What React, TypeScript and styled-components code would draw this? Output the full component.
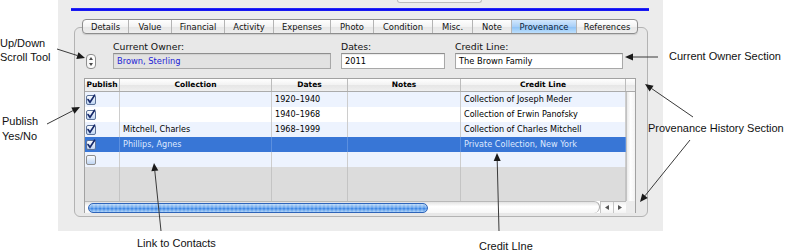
import styled, { createGlobalStyle, css } from 'styled-components'

const GlobalStyle = createGlobalStyle`
  *, *::before, *::after { box-sizing: border-box; }
  html, body { margin: 0; padding: 0; background: #fff; }
  body { font-family: "DejaVu Sans", Verdana, sans-serif; }
`

const Page = styled.div`
  position: relative;
  width: 786px;
  height: 252px;
  overflow: hidden;
  background: #fff;
`

const Window = styled.div`
  margin-left: 58px;
  width: 605px;
  height: 231px;
  background: #ececec;
  display: flex;
  flex-direction: column;
  align-items: flex-start;
`

const TopStub = styled.div`
  margin-left: 339px;
  width: 85px;
  height: 3px;
  border: 1px solid #bdbdbd;
  border-top: none;
  border-radius: 0 0 3px 3px;
  background: #f6f6f6;
`

const BlueRule = styled.div`
  margin: 5px 0 0 13px;
  width: 578px;
  height: 3px;
  background: linear-gradient(#3030f4, #0a0af2 50%, #2222f0);
`

const TabStrip = styled.div`
  position: relative;
  z-index: 1;
  display: flex;
  margin: 8px 0 0 24px;
  height: 15px;
  border: 1px solid #8d8d8d;
  border-radius: 4px;
  overflow: hidden;
  background: linear-gradient(#ffffff, #f3f3f3 50%, #e6e6e6 51%, #eeeeee);
  box-shadow: 0 1px 1px rgba(0, 0, 0, 0.12);
`

const Tab = styled.div<{ $w: number; $active?: boolean }>`
  width: ${p => p.$w}px;
  display: flex;
  align-items: center;
  justify-content: center;
  font-size: 8.4px;
  color: #111;
  border-left: 1px solid #b4b4b4;
  white-space: nowrap;

  &:first-child {
    border-left: none;
  }

  ${p => p.$active && css`
    background: linear-gradient(#d3e8fd, #a9d0f8 50%, #8bc1f6 51%, #bddffc);
    color: #0c1e3a;
  `}
`

const GroupBox = styled.div`
  margin: -7px 0 0 16px;
  width: 574px;
  height: 190px;
  border: 1px solid #b3b3b3;
  border-radius: 6px;
  background: #e8e8e8;
  padding: 13px 0 0 9px;
  display: flex;
  flex-direction: column;
`

const FieldRow = styled.div`
  display: flex;
  align-items: flex-end;
  gap: 10px;
  margin-left: 2px;
`

const Stepper = styled.div`
  width: 10px;
  height: 15px;
  margin-right: 7px;
  border: 1px solid #8f8f8f;
  border-radius: 4px;
  background: linear-gradient(to right, #f4f4f4, #ffffff);
  display: flex;
  flex-direction: column;
  align-items: center;
  justify-content: space-between;
  padding: 2px 0;

  svg {
    display: block;
  }
`

const FieldGroup = styled.div<{ $w: number }>`
  width: ${p => p.$w}px;
  display: flex;
  flex-direction: column;
`

const Label = styled.div`
  height: 12px;
  line-height: 12px;
  font-size: 9.3px;
  color: #111;
  white-space: nowrap;
`

const Input = styled.div<{ $readOnly?: boolean }>`
  height: 16px;
  line-height: 14px;
  padding-left: 3px;
  font-size: 8.3px;
  white-space: nowrap;
  border: 1px solid #a8a8a8;
  border-top-color: #8e8e8e;
  background: ${p => (p.$readOnly ? '#e2e2e2' : '#ffffff')};
  color: ${p => (p.$readOnly ? '#2424d6' : '#000')};
  box-shadow: inset 0 1px 1px rgba(0, 0, 0, 0.08);
`

const COLS = '35px 152px 76px 113px 165px'

const Table = styled.div`
  margin-top: 9px;
  width: 552px;
  height: 135px;
  border: 1px solid #a2a2a2;
  border-bottom: none;
  background: #fff;
  display: flex;
  flex-direction: column;
`

const HeaderRow = styled.div`
  display: grid;
  grid-template-columns: ${COLS} 9px;
  height: 13px;
  background: linear-gradient(#ffffff, #f2f2f2 50%, #e6e6e6 51%, #efefef);
  border-bottom: 1px solid #ababab;
`

const HeaderCell = styled.div`
  border-right: 1px solid #bcbcbc;
  font-size: 7.5px;
  font-weight: bold;
  line-height: 12px;
  text-align: center;
  color: #000;
  white-space: nowrap;
  overflow: hidden;

  &:last-child {
    border-right: none;
  }
`

const Body = styled.div`
  display: flex;
  height: 109px;
`

const Grid = styled.div`
  width: 541px;
  display: flex;
  flex-direction: column;
`

type Tone = 'blue' | 'white' | 'selected'

const Row = styled.div<{ $tone: Tone }>`
  display: grid;
  grid-template-columns: ${COLS};
  height: 15px;
  background: ${p => (p.$tone === 'selected' ? '#3876d6' : p.$tone === 'blue' ? '#edf3fe' : '#ffffff')};
  color: ${p => (p.$tone === 'selected' ? '#dfe9ff' : '#000')};
`

const Cell = styled.div<{ $tone?: Tone }>`
  border-right: 1px solid ${p => (p.$tone === 'selected' ? '#5b8fdf' : '#cdcdcd')};
  padding-left: 3px;
  font-size: 8.1px;
  line-height: 15px;
  white-space: nowrap;
  overflow: hidden;
`

const Filler = styled.div`
  flex: 1;
  display: grid;
  grid-template-columns: ${COLS};
  background: #dcdcdc;
`

const FillerCell = styled.div`
  border-right: 1px solid #c4c4c4;
`

const VScroll = styled.div`
  width: 9px;
  border-left: 1px solid #c2c2c2;
  background: linear-gradient(to right, #eaeaea, #ffffff 45%, #f3f3f3);
`

const HScroll = styled.div`
  display: flex;
  height: 12px;
`

const Track = styled.div`
  flex: 1;
  padding: 1px 0 0 3px;
  border-top: 1px solid #b8b8b8;
  border-right: 1px solid #a8a8a8;
  border-radius: 0 6px 6px 0;
  background: linear-gradient(#e2e2e2, #ffffff 40%, #f7f7f7);
`

const Thumb = styled.div<{ $w: number }>`
  width: ${p => p.$w}px;
  height: 10px;
  border: 1px solid #2f64b8;
  border-radius: 5px;
  background:
    repeating-linear-gradient(90deg, rgba(255, 255, 255, 0.18) 0 2px, rgba(255, 255, 255, 0) 2px 4px),
    linear-gradient(#b9d8f8, #6aa6ee 45%, #3f88e6 55%, #9fcbf7);
`

const ArrowButtons = styled.div`
  width: 26px;
  display: flex;
  border-top: 1px solid #b8b8b8;
  background: linear-gradient(#efefef, #ffffff 45%, #f3f3f3);
`

const ArrowButton = styled.div`
  flex: 1;
  display: flex;
  align-items: center;
  justify-content: center;
  border-left: 1px solid #c6c6c6;
`

const Corner = styled.div`
  width: 9px;
  background: #ececec;
`

const Note = styled.div<{ $x: number; $y: number; $lh?: number }>`
  position: absolute;
  left: ${p => p.$x}px;
  top: ${p => p.$y}px;
  font-family: "Liberation Sans", Arial, sans-serif;
  font-size: 11px;
  line-height: ${p => p.$lh ?? 14}px;
  color: #111;
  white-space: nowrap;
`

const Overlay = styled.svg`
  position: absolute;
  left: 0;
  top: 0;
  pointer-events: none;
`

const tabs = [
  ['Details', 45], ['Value', 43], ['Financial', 53], ['Activity', 49], ['Expenses', 57],
  ['Photo', 43], ['Condition', 59], ['Misc.', 40], ['Note', 39], ['Provenance', 65], ['References', 61],
] as const

const rows: { pub: boolean; coll: string; dates: string; notes: string; credit: string; tone: Tone }[] = [
  { pub: true, coll: '', dates: '1920–1940', notes: '', credit: 'Collection of Joseph Meder', tone: 'blue' },
  { pub: true, coll: '', dates: '1940–1968', notes: '', credit: 'Collection of Erwin Panofsky', tone: 'white' },
  { pub: true, coll: 'Mitchell, Charles', dates: '1968–1999', notes: '', credit: 'Collection of Charles Mitchell', tone: 'blue' },
  { pub: true, coll: 'Phillips, Agnes', dates: '', notes: '', credit: 'Private Collection, New York', tone: 'selected' },
  { pub: false, coll: '', dates: '', notes: '', credit: '', tone: 'blue' },
]

const Check = ({ on }: { on: boolean }) => (
  <svg width="10" height="11" viewBox="0 0 10 11" style={{ display: 'block', margin: '2px 0 0 1px' }}>
    <defs>
      <linearGradient id="cb" x1="0" y1="0" x2="0" y2="1">
        <stop offset="0" stopColor="#ffffff" />
        <stop offset="1" stopColor={on ? '#bcd3f2' : '#e8e8e8'} />
      </linearGradient>
    </defs>
    <rect x="0.5" y="1.5" width="9" height="9" rx="1.5" fill="url(#cb)" stroke={on ? '#5c7299' : '#8e8e8e'} />
    {on && <path d="M2 5.5 L4 8.3 L8.6 1.2" fill="none" stroke="#15286a" strokeWidth="1.6" strokeLinecap="round" />}
  </svg>
)

const Arrow = ({ x1, y1, x2, y2 }: { x1: number; y1: number; x2: number; y2: number }) => {
  const a = Math.atan2(y2 - y1, x2 - x1)
  const len = 8
  const hw = 3.5
  const bx = x2 - Math.cos(a) * len
  const by = y2 - Math.sin(a) * len
  const px = -Math.sin(a) * hw
  const py = Math.cos(a) * hw
  return (
    <g>
      <line x1={x1} y1={y1} x2={bx} y2={by} stroke="#3a3a3a" strokeWidth="1" />
      <polygon points={`${x2},${y2} ${bx + px},${by + py} ${bx - px},${by - py}`} fill="#1a1a1a" />
    </g>
  )
}

export default function App() {
  return (
    <Page>
      <GlobalStyle />
      <Window>
        <TopStub />
        <BlueRule />
        <TabStrip>
          {tabs.map(([name, w]) => (
            <Tab key={name} $w={w} $active={name === 'Provenance'}>{name}</Tab>
          ))}
        </TabStrip>
        <GroupBox>
          <FieldRow>
            <Stepper>
              <svg width="4" height="3" viewBox="0 0 4 3"><path d="M0 3 L2 0 L4 3 Z" fill="#4a4a4a" /></svg>
              <svg width="4" height="3" viewBox="0 0 4 3"><path d="M0 0 L2 3 L4 0 Z" fill="#4a4a4a" /></svg>
            </Stepper>
            <FieldGroup $w={218}>
              <Label>Current Owner:</Label>
              <Input $readOnly>Brown, Sterling</Input>
            </FieldGroup>
            <FieldGroup $w={104}>
              <Label>Dates:</Label>
              <Input>2011</Input>
            </FieldGroup>
            <FieldGroup $w={168}>
              <Label>Credit Line:</Label>
              <Input>The Brown Family</Input>
            </FieldGroup>
          </FieldRow>
          <Table>
            <HeaderRow>
              <HeaderCell>Publish</HeaderCell>
              <HeaderCell>Collection</HeaderCell>
              <HeaderCell>Dates</HeaderCell>
              <HeaderCell>Notes</HeaderCell>
              <HeaderCell>Credit Line</HeaderCell>
              <HeaderCell />
            </HeaderRow>
            <Body>
              <Grid>
                {rows.map((r, i) => (
                  <Row key={i} $tone={r.tone}>
                    <Cell $tone={r.tone} style={{ paddingLeft: 0 }}><Check on={r.pub} /></Cell>
                    <Cell $tone={r.tone}>{r.coll}</Cell>
                    <Cell $tone={r.tone}>{r.dates}</Cell>
                    <Cell $tone={r.tone}>{r.notes}</Cell>
                    <Cell $tone={r.tone}>{r.credit}</Cell>
                  </Row>
                ))}
                <Filler>
                  <FillerCell />
                  <FillerCell />
                  <FillerCell />
                  <FillerCell />
                  <FillerCell />
                </Filler>
              </Grid>
              <VScroll />
            </Body>
            <HScroll>
              <Track>
                <Thumb $w={340} />
              </Track>
              <ArrowButtons>
                <ArrowButton>
                  <svg width="4" height="5" viewBox="0 0 4 5"><path d="M4 0 L0 2.5 L4 5 Z" fill="#555" /></svg>
                </ArrowButton>
                <ArrowButton>
                  <svg width="4" height="5" viewBox="0 0 4 5"><path d="M0 0 L4 2.5 L0 5 Z" fill="#555" /></svg>
                </ArrowButton>
              </ArrowButtons>
              <Corner />
            </HScroll>
          </Table>
        </GroupBox>
      </Window>

      <Note $x={0} $y={36}>Up/Down<br />Scroll Tool</Note>
      <Note $x={2} $y={114} $lh={15}>Publish<br />Yes/No</Note>
      <Note $x={669} $y={49}>Current Owner Section</Note>
      <Note $x={648} $y={121}>Provenance History Section</Note>
      <Note $x={137} $y={236}>Link to Contacts</Note>
      <Note $x={479} $y={239}>Credit LIne</Note>

      <Overlay width="786" height="252" viewBox="0 0 786 252">
        <Arrow x1={57} y1={49} x2={85} y2={58} />
        <Arrow x1={47} y1={124} x2={80} y2={107} />
        <Arrow x1={658} y1={57} x2={625} y2={57} />
        <Arrow x1={693} y1={117} x2={645} y2={84} />
        <Arrow x1={690} y1={140} x2={640} y2={202} />
        <Arrow x1={161} y1={231} x2={154} y2={163} />
        <Arrow x1={499} y1={231} x2={497} y2={153} />
      </Overlay>
    </Page>
  )
}
